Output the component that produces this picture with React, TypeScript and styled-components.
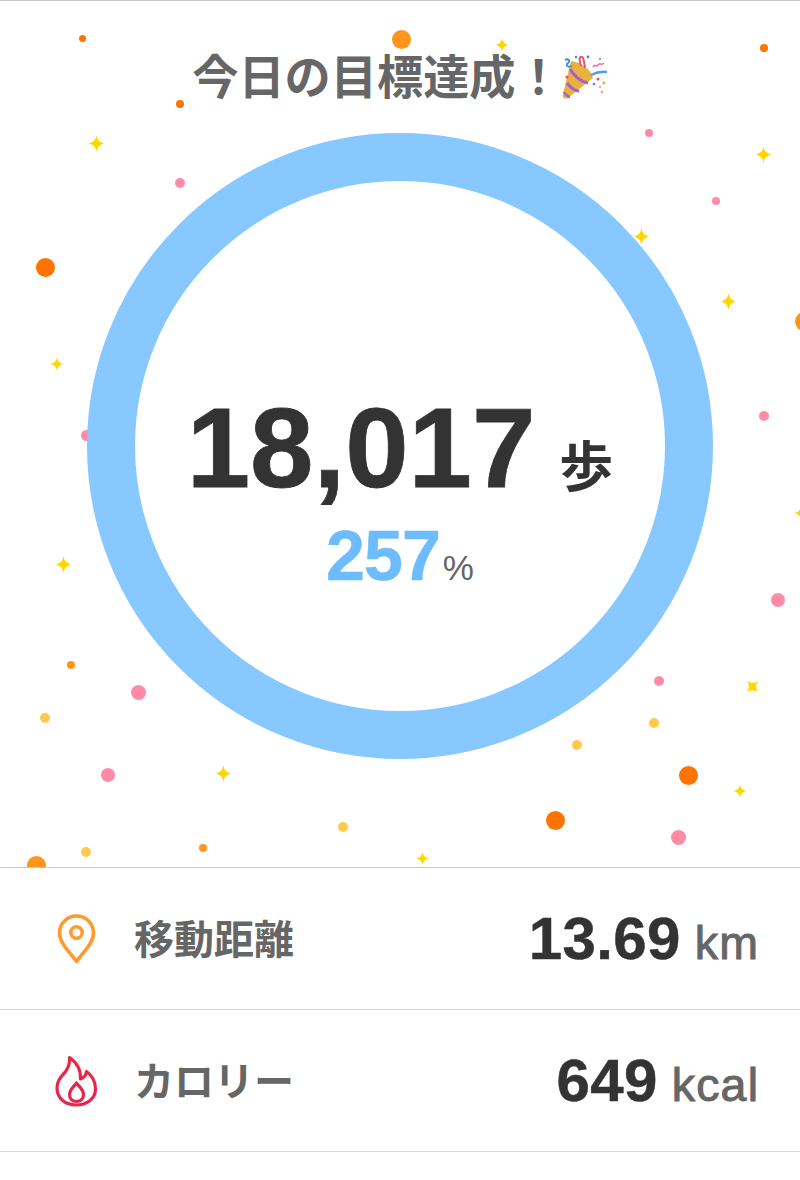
import React from 'react';
import styled, { createGlobalStyle } from 'styled-components';

const GlobalStyle = createGlobalStyle`
  html, body {
    margin: 0;
    padding: 0;
    background: #fff;
  }
  body {
    font-family: "Liberation Sans", "Noto Sans CJK JP", sans-serif;
  }
`;

const ORANGE = '#ff7300';
const AMBER = '#ff951c';
const PINK = '#ff8ba7';
const YELLOW = '#ffc94d';

// [x, y, diameter, colour], page coordinates of the centre
const dots: [number, number, number, string][] = [
  [82, 38, 7, ORANGE],
  [401, 39, 19, AMBER],
  [764, 48, 8, ORANGE],
  [180, 104, 8, ORANGE],
  [649, 133, 8, PINK],
  [180, 183, 10, PINK],
  [716, 201, 8, PINK],
  [45, 267, 19, ORANGE],
  [804, 321, 19, AMBER],
  [764, 416, 10, PINK],
  [86, 435, 11, PINK],
  [778, 600, 14, PINK],
  [71, 665, 8, AMBER],
  [659, 681, 10, PINK],
  [138, 692, 15, PINK],
  [45, 718, 10, YELLOW],
  [654, 723, 10, YELLOW],
  [577, 745, 10, YELLOW],
  [108, 775, 14, PINK],
  [688, 775, 19, ORANGE],
  [555, 820, 19, ORANGE],
  [343, 827, 10, YELLOW],
  [678, 837, 15, PINK],
  [203, 848, 8, AMBER],
  [86, 852, 10, YELLOW],
  [36, 865, 19, AMBER],
];

// [x, y, size, rotation]
const sparkles: [number, number, number, number][] = [
  [502, 45, 14, 0],
  [96, 143, 17, 0],
  [763, 154, 17, 0],
  [641, 236, 17, 0],
  [728, 301, 17, 0],
  [57, 364, 14, 0],
  [801, 513, 14, 0],
  [63, 564, 17, 0],
  [752, 686, 17, 45],
  [223, 773, 17, 0],
  [740, 791, 14, 0],
  [422, 858, 13, 0],
];

const Page = styled.div`
  width: 800px;
  height: 1180px;
  overflow: hidden;
  background: #fff;
  border-top: 1px solid #c8c8c8;
  box-sizing: border-box;
`;

const Hero = styled.section`
  position: relative;
  height: 866px;
  overflow: hidden;
  display: flex;
  flex-direction: column;
  align-items: center;
  border-bottom: 1px solid #c8c8c8;
  box-sizing: content-box;
`;

const Dot = styled.span<{ $x: number; $y: number; $size: number; $color: string }>`
  position: absolute;
  left: ${(p) => p.$x - p.$size / 2}px;
  top: ${(p) => p.$y - 1 - p.$size / 2}px;
  width: ${(p) => p.$size}px;
  height: ${(p) => p.$size}px;
  border-radius: 50%;
  background: ${(p) => p.$color};
`;

const SparkleSvg = styled.svg<{ $x: number; $y: number; $size: number; $rotate: number }>`
  position: absolute;
  left: ${(p) => p.$x - p.$size / 2}px;
  top: ${(p) => p.$y - 1 - p.$size / 2}px;
  width: ${(p) => p.$size}px;
  height: ${(p) => p.$size}px;
  transform: rotate(${(p) => p.$rotate}deg);
`;

const TitleRow = styled.div`
  position: relative;
  display: flex;
  align-items: flex-start;
  height: 48px;
  margin-top: 52px;
`;

const Title = styled.h1`
  margin: -3px 0 0;
  font-family: "Noto Sans CJK JP", sans-serif;
  font-size: 46.2px;
  font-weight: 700;
  line-height: 48px;
  color: #666;
  white-space: nowrap;
`;

const Ring = styled.div`
  position: relative;
  width: 626px;
  height: 626px;
  margin-top: 32px;
  flex: none;
  box-sizing: border-box;
  border: 48px solid #86c8ff;
  border-radius: 50%;
  background: #fff;
  display: flex;
  flex-direction: column;
  align-items: center;
`;

const StepsRow = styled.div`
  display: flex;
  align-items: baseline;
  height: 132px;
  margin-top: 201px;
`;

const StepsValue = styled.span`
  font-size: 114px;
  font-weight: 700;
  line-height: 132px;
  letter-spacing: 0;
  color: #333;
  -webkit-text-stroke: 0.8px #333;
`;

const StepsUnit = styled.span`
  font-family: "Noto Sans CJK JP", sans-serif;
  font-size: 54px;
  font-weight: 700;
  color: #333;
  margin-left: 24px;
`;

const PercentRow = styled.div`
  display: flex;
  align-items: baseline;
  margin-top: 2px;
`;

const PercentValue = styled.span`
  font-size: 70px;
  font-weight: 700;
  line-height: 80px;
  letter-spacing: -1px;
  color: #6cbcff;
  -webkit-text-stroke: 0.6px #6cbcff;
`;

const PercentSign = styled.span`
  font-size: 35px;
  color: #666;
  margin-left: 3px;
`;

const StatRow = styled.div`
  height: 141px;
  display: flex;
  align-items: center;
  padding: 0 42px 0 54px;
  border-bottom: 1px solid #d8d8d8;
`;

const IconBox = styled.div`
  width: 44px;
  height: 54px;
  flex: none;
  display: flex;
  align-items: center;
  justify-content: center;
`;

const StatLabel = styled.span`
  font-family: "Noto Sans CJK JP", sans-serif;
  font-size: 40px;
  font-weight: 700;
  color: #666;
  margin-left: 36px;
  margin-top: -4px;
`;

const StatValue = styled.div`
  margin-left: auto;
  display: flex;
  align-items: baseline;
`;

const StatNumber = styled.span`
  font-size: 60px;
  font-weight: 700;
  letter-spacing: 0.4px;
  color: #333;
  -webkit-text-stroke: 0.5px #333;
`;

const StatUnit = styled.span`
  font-size: 46.5px;
  color: #666;
  letter-spacing: 1.2px;
  margin-left: 14px;
  margin-right: -1.2px;
  -webkit-text-stroke: 1px #666;
`;

const Sparkle = ({ x, y, size, rotate }: { x: number; y: number; size: number; rotate: number }) => (
  <SparkleSvg $x={x} $y={y} $size={size} $rotate={rotate} viewBox="0 0 20 20">
    <path d="M10 0 C10.8 6 14 9.2 20 10 C14 10.8 10.8 14 10 20 C9.2 14 6 10.8 0 10 C6 9.2 9.2 6 10 0 Z" fill="#ffd600" />
  </SparkleSvg>
);

const PartyPopper = () => (
  <svg width="46" height="46" viewBox="7 8 46 46">
    <path d="M16 16 C25 17 36 24 38 33 L13 53 C9 55 7 52 8 49 Z" fill="#e8b33c" />
    <path d="M15 24 C19 31 26 37 33 38" stroke="#a85fd0" strokeWidth="3" fill="none" />
    <path d="M12 38 C15 42 20 46 24 46" stroke="#a85fd0" strokeWidth="3" fill="none" />
    <path d="M9 47 C10 49 13 52 15 52" stroke="#a85fd0" strokeWidth="2.4" fill="none" />
    <path d="M36 30 C40 28 46 26 52 27" stroke="#4f9cf0" strokeWidth="2.4" fill="none" />
    <path d="M10 15 C13 13 16 16 13 18 C10 20 13 23 17 21" stroke="#3f8be8" strokeWidth="1.8" fill="none" />
    <path d="M26 21 C24 15 24 11 27 12 C29 13 29 17 30 23" stroke="#f0506e" strokeWidth="2" fill="none" />
    <path d="M38 22 C40 18 41 23 43 20 C45 17 46 21 49 18" stroke="#f07aa0" strokeWidth="1.7" fill="none" />
    <circle cx="21" cy="12" r="1.3" fill="#3f8be8" />
    <circle cx="33" cy="12" r="1.4" fill="#3f8be8" />
    <circle cx="45" cy="14" r="1.2" fill="#f07aa0" />
    <circle cx="12" cy="32" r="1.6" fill="#f0506e" />
    <circle cx="43" cy="34" r="1.5" fill="#f0506e" />
    <circle cx="39" cy="39" r="1.3" fill="#3f8be8" />
    <circle cx="49" cy="38" r="1.4" fill="#f5a64a" />
    <circle cx="45" cy="42" r="1.3" fill="#f5c04a" />
    <circle cx="47" cy="47" r="1.5" fill="#f5a0c0" />
  </svg>
);

const PinIcon = () => (
  <svg width="40" height="50" viewBox="0 0 40 50" fill="none" stroke="#ff9a2e" strokeWidth="3.6" strokeLinejoin="round">
    <path d="M20.500 47.500 C14 38.500 3.500 29 3.500 19 C3.500 9.500 11 2 20.500 2 C30 2 37.500 9.500 37.500 19 C37.500 29 27 38.500 20.500 47.500 Z" />
    <circle cx="20.500" cy="18.500" r="5.700" />
  </svg>
);

const FlameIcon = () => (
  <svg width="44" height="54" viewBox="0 0 44 54" fill="none" stroke="#e8264a" strokeWidth="3.2" strokeLinejoin="round">
    <path d="M15.500 3.500 C22 8 27 15 26.500 25 C30 24 32 21 32.500 17.500 C38 21.500 41.500 28 41.500 35 C41.500 45 32.500 51 22 51 C11 51 3 44 3 34 C3 26 8 22 12 17 C14.500 13 16 9 15.500 3.500 Z" />
    <path d="M22.500 29 C25 32.500 29.500 35.500 29.500 40.500 C29.500 45 26.500 47.500 22.500 47.500 C18.500 47.500 15.500 45 15.500 40.500 C15.500 35.500 20 32.500 22.500 29 Z" />
  </svg>
);

const App = () => (
  <Page>
    <GlobalStyle />
    <Hero>
      {dots.map(([x, y, size, color]) => (
        <Dot key={`${x}-${y}`} $x={x} $y={y} $size={size} $color={color} />
      ))}
      {sparkles.map(([x, y, size, rotate]) => (
        <Sparkle key={`${x}-${y}`} x={x} y={y} size={size} rotate={rotate} />
      ))}
      <TitleRow>
        <Title>今日の目標達成！</Title>
        <PartyPopper />
      </TitleRow>
      <Ring>
        <StepsRow>
          <StepsValue>18,017</StepsValue>
          <StepsUnit>歩</StepsUnit>
        </StepsRow>
        <PercentRow>
          <PercentValue>257</PercentValue>
          <PercentSign>%</PercentSign>
        </PercentRow>
      </Ring>
    </Hero>
    <StatRow>
      <IconBox>
        <PinIcon />
      </IconBox>
      <StatLabel>移動距離</StatLabel>
      <StatValue>
        <StatNumber>13.69</StatNumber>
        <StatUnit>km</StatUnit>
      </StatValue>
    </StatRow>
    <StatRow>
      <IconBox>
        <FlameIcon />
      </IconBox>
      <StatLabel>カロリー</StatLabel>
      <StatValue>
        <StatNumber>649</StatNumber>
        <StatUnit>kcal</StatUnit>
      </StatValue>
    </StatRow>
  </Page>
);

export default App;
